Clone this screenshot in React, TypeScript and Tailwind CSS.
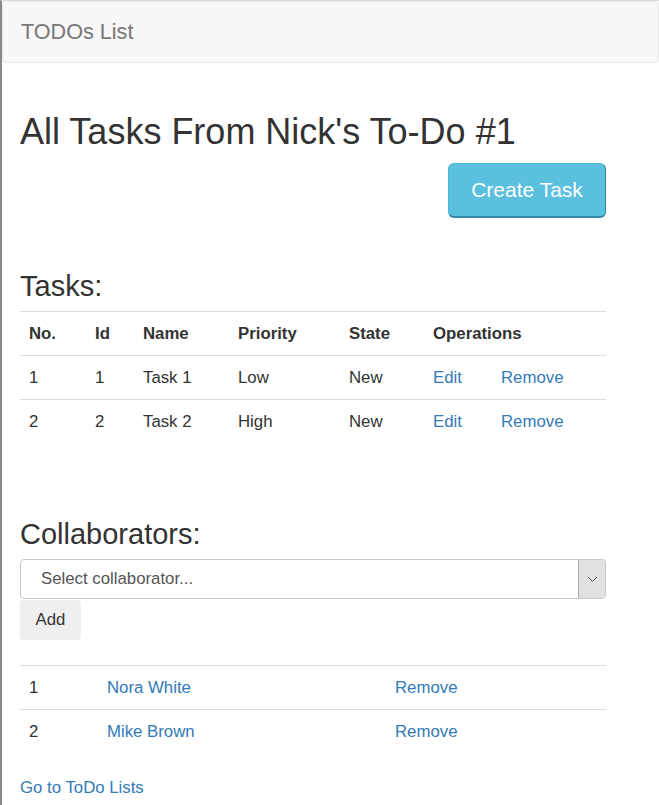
import React from "react";

const tasks = [
  { no: 1, id: 1, name: "Task 1", priority: "Low", state: "New" },
  { no: 2, id: 2, name: "Task 2", priority: "High", state: "New" },
];

const collaborators = [
  { no: 1, name: "Nora White" },
  { no: 2, name: "Mike Brown" },
];

export default function App() {
  return (
    <div className="min-h-screen bg-white border-l-2 border-[#8a8a8a] border-t border-t-[#dcdcdc] text-[#333] font-['Liberation_Sans',Arial,sans-serif] text-[16.8px]">
      {/* Navbar */}
      <div className="h-[62px] bg-[#f8f8f8] border border-[#e7e7e7] rounded-[4px] flex items-center pl-[18px]">
        <span className="text-[21.6px] text-[#777]">TODOs List</span>
      </div>

      {/* Content */}
      <div className="pl-[18px] w-[604px]">
        <h1 className="mt-[49px] text-[36px] leading-[40px]">
          All Tasks From Nick's To-Do #1
        </h1>
        <div className="flex justify-end mt-[11px]">
          <button className="h-[55px] w-[158px] rounded-[6px] bg-[#5bc0de] border border-[#46b8da] border-r-[#2f8aa6] border-b-[#2f8aa6] border-b-2 text-white text-[21px]">
            Create Task
          </button>
        </div>

        <h2 className="mt-[52px] text-[29px] leading-[32px]">Tasks:</h2>
        <div className="mt-[9px] w-[586px]">
          <div className="grid grid-cols-[66px_48px_95px_111px_84px_68px_1fr] h-[44px] border-t border-[#ddd] items-center font-bold">
            <div className="pl-[9px]">No.</div>
            <div className="pl-[9px]">Id</div>
            <div className="pl-[9px]">Name</div>
            <div className="pl-[9px]">Priority</div>
            <div className="pl-[9px]">State</div>
            <div className="pl-[9px] col-span-2">Operations</div>
          </div>
          {tasks.map((t) => (
            <div
              key={t.id}
              className="grid grid-cols-[66px_48px_95px_111px_84px_68px_1fr] h-[44px] border-t border-[#ddd] items-center"
            >
              <div className="pl-[9px]">{t.no}</div>
              <div className="pl-[9px]">{t.id}</div>
              <div className="pl-[9px]">{t.name}</div>
              <div className="pl-[9px]">{t.priority}</div>
              <div className="pl-[9px]">{t.state}</div>
              <div className="pl-[9px] text-[#337ab7]">Edit</div>
              <div className="pl-[9px] text-[#337ab7]">Remove</div>
            </div>
          ))}
        </div>

        <h2 className="mt-[75px] text-[29px] leading-[32px]">Collaborators:</h2>
        <div className="mt-[9px] w-[586px] h-[40px] border border-[#c8c8c8] rounded-[4px] flex items-center">
          <span className="flex-1 pl-[20px] text-[#555]">Select collaborator...</span>
          <div className="w-[27px] h-full bg-[#e1e1e1] border-l border-[#adadad] rounded-r-[3px] flex items-center justify-center">
            <svg width="11" height="7" viewBox="0 0 11 7" fill="none">
              <path d="M1 1l4.5 4.5L10 1" stroke="#555" strokeWidth="1" />
            </svg>
          </div>
        </div>
        <button className="mt-[1px] h-[40px] w-[61px] rounded-[4px] bg-[#efefef] text-[#333]">
          Add
        </button>

        <div className="mt-[25px] w-[586px]">
          {collaborators.map((c) => (
            <div
              key={c.no}
              className="grid grid-cols-[78px_288px_1fr] h-[44px] border-t border-[#ddd] items-center"
            >
              <div className="pl-[9px]">{c.no}</div>
              <div className="pl-[9px] text-[#337ab7]">{c.name}</div>
              <div className="pl-[9px] text-[#337ab7]">Remove</div>
            </div>
          ))}
        </div>

        <div className="mt-[24px] leading-[22px] text-[#337ab7]">Go to ToDo Lists</div>
      </div>
    </div>
  );
}
